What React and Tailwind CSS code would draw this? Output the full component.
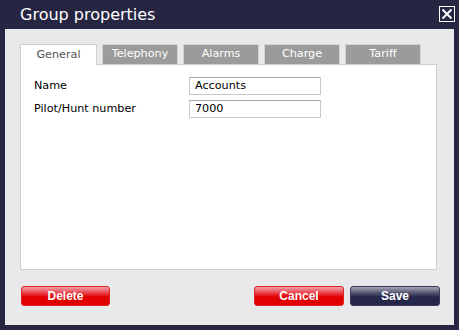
import React from 'react';

const tabs = ['General', 'Telephony', 'Alarms', 'Charge', 'Tariff'];

const verdana = { fontFamily: '"DejaVu Sans", Verdana, sans-serif' };

const Button = ({ label, tone, className = '' }) => {
  const styles =
    tone === 'red'
      ? 'bg-[linear-gradient(#f3a0aa_0%,#ea4a55_30%,#e00000_55%,#e00000_100%)] border-[#d22]'
      : 'bg-[linear-gradient(#a5a5b8_0%,#5c5c78_30%,#26264a_55%,#26264a_100%)] border-[#3a3a58]';
  return (
    <button
      className={`h-[20px] rounded-[3px] border text-white font-bold text-[12px] flex items-center justify-center font-['Liberation_Sans',Arial,sans-serif] ${styles} ${className}`}
    >
      {label}
    </button>
  );
};

export default function App() {
  return (
    <div className="w-[459px] h-[330px] bg-[#262643] flex flex-col px-[5px] pb-[5px]" style={verdana}>
      {/* Title bar */}
      <div className="h-[29px] flex items-center justify-between pl-[15px]">
        <span className="text-white text-[16px] leading-none">Group properties</span>
        <div className="w-[16px] h-[16px] border border-white flex items-center justify-center mr-[-1px] mt-[-1px]">
          <svg width="12" height="12" viewBox="0 0 12 12">
            <path d="M1.5 1.5 L10.5 10.5 M10.5 1.5 L1.5 10.5" stroke="white" strokeWidth="2" />
          </svg>
        </div>
      </div>

      {/* Panel */}
      <div className="flex-1 bg-[#e9e9eb] pl-[15px] pt-[15px] flex flex-col">
        {/* Tabs */}
        <div className="flex gap-[5px] h-[20px] relative z-10">
          {tabs.map((t, i) => (
            <div
              key={t}
              className={
                i === 0
                  ? 'w-[77px] h-[21px] bg-white border border-b-0 border-[#d0d0d0] text-[#555] text-[11.2px] flex items-center justify-center'
                  : 'w-[76px] h-[20px] bg-[#9b9b9b] border border-b-0 border-[#d4d4d4] text-white text-[11.2px] flex items-center justify-center'
              }
            >
              {t}
            </div>
          ))}
        </div>

        {/* Content box */}
        <div className="w-[417px] h-[206px] bg-white border border-[#d0d0d0] pt-[12px] pl-[13px] flex flex-col gap-[5px]">
          <div className="flex items-center">
            <span className="w-[155px] text-[11.2px] text-black">Name</span>
            <div className="w-[132px] h-[18px] border border-[#c8c8c8] border-t-[#a8a8a8] flex items-center pl-[5px] text-[11.2px] text-black">
              Accounts
            </div>
          </div>
          <div className="flex items-center">
            <span className="w-[155px] text-[11.2px] text-black">Pilot/Hunt number</span>
            <div className="w-[132px] h-[18px] border border-[#c8c8c8] border-t-[#a8a8a8] flex items-center pl-[5px] text-[11.2px] text-black">
              7000
            </div>
          </div>
        </div>

        {/* Buttons */}
        <div className="flex items-center mt-[16px] w-[420px] pl-[1px]">
          <Button label="Delete" tone="red" className="w-[89px]" />
          <div className="flex-1" />
          <Button label="Cancel" tone="red" className="w-[90px]" />
          <Button label="Save" tone="dark" className="w-[90px] ml-[6px]" />
        </div>
      </div>
    </div>
  );
}
